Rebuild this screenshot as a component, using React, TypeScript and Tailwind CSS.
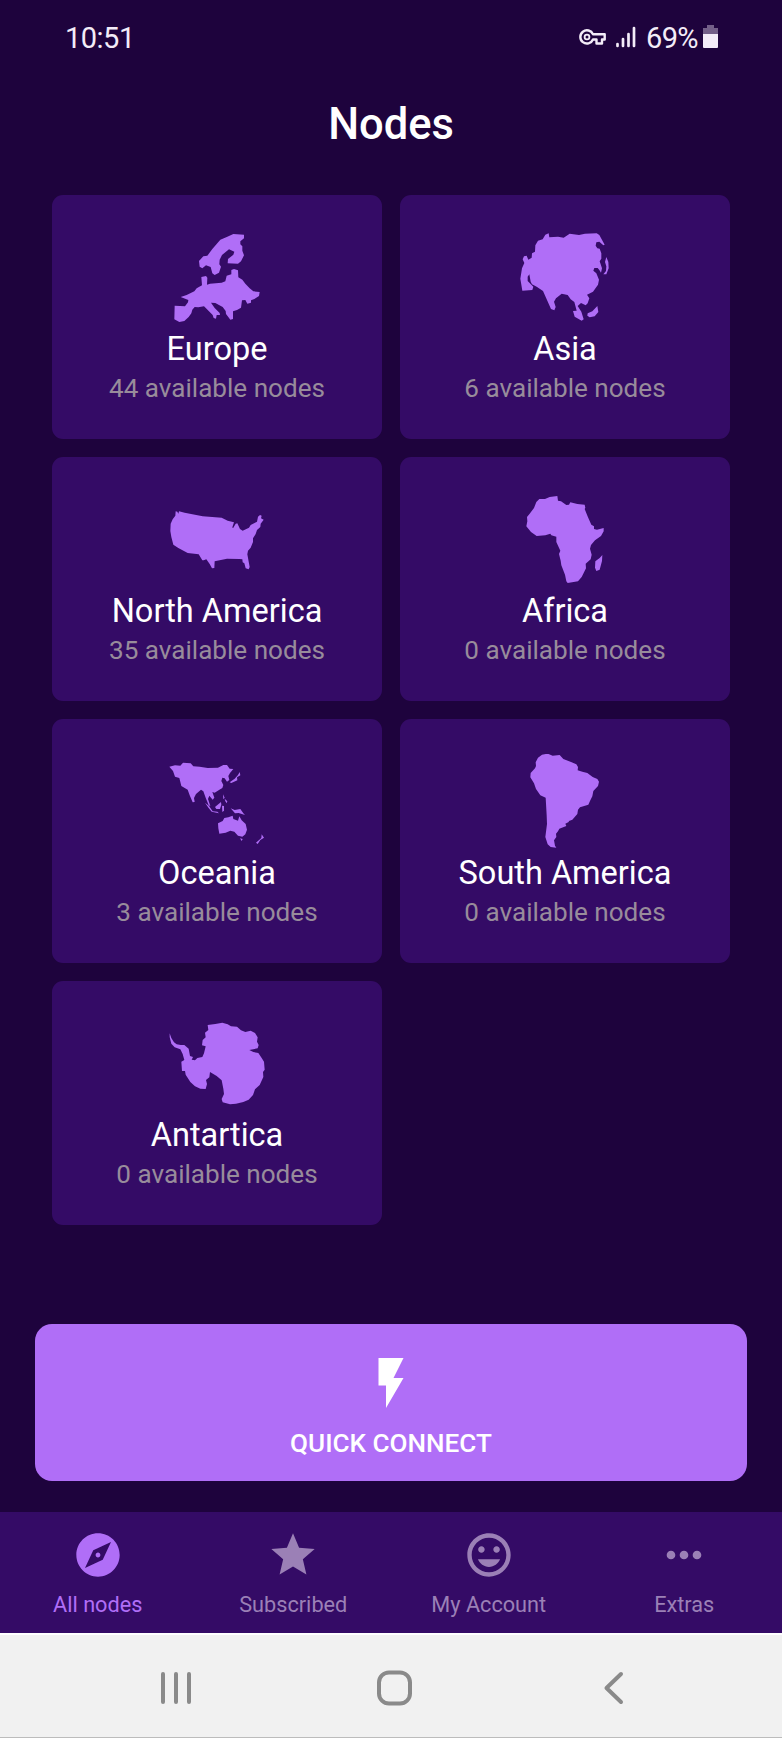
import React from "react";
import {
    MdExplore,
    MdFlashOn,
    MdInsertEmoticon,
    MdMoreHoriz,
    MdStar,
} from "react-icons/md";

interface Region {
    name: string;
    nodes: number;
    viewBox: string;
    path: string;
}

const regions: Region[] = [
    {
        name: "Europe",
        nodes: 44,
        viewBox: "27 30 288 288",
        path: "M117 123L130 109L142 107L157 87L181 59L202 50L220 42L252 44L252 55L241 64L241 73L247 79L247 92L252 106L243 124L234 131L203 130L204 117L220 104L223 95L207 88L196 97L186 105L179 119L178 133L183 140L177 158L164 165L157 160L152 141L138 136L127 145L119 140Z M124 171L138 168L142 173L141 194L150 191L185 188L196 184L200 167L214 163L214 150L222 147L234 151L235 172L247 179L256 191L269 205L280 214L299 216L297 228L283 237L273 241L273 248L262 251L256 240L246 241L243 263L231 270L219 274L219 297L211 299L198 282L197 273L188 261L166 249L153 248L164 264L179 279L180 285L170 285L168 296L161 294L158 285L138 265L132 259L115 262L104 261L97 269L94 280L86 291L73 303L58 306L43 298L44 257L75 259L84 247L85 240L62 231L80 225L103 214L110 205L126 196Z",
    },
    {
        name: "Asia",
        nodes: 6,
        viewBox: "21 30 288 288",
        path: "M75 95L76 76L84 62L98 58L106 44L116 40L118 52L144 50L161 53L179 41L207 45L225 41L260 40L268 45L284 74L280 76L268 65L259 67L257 77L262 85L269 86L274 100L274 116L269 124L276 145L273 158L268 150L263 144L253 144L250 152L259 160L267 179L264 194L249 215L231 224L238 235L233 250L227 256L213 249L203 258L214 275L221 298L215 302L194 290L189 273L200 272L193 246L182 238L173 225L155 221L138 235L132 245L137 261L133 271L123 267L108 233L99 213L80 200L66 193L62 185L58 163L53 170L53 183L70 200L67 210L37 212L31 176L36 145L43 129L38 118L42 109L50 107L55 119L65 113L66 100Z M289 111L295 126L296 145L289 163L280 163L288 153L289 139L285 126Z M262 258L265 276L254 289L239 292L232 287L233 280L247 274Z",
    },
    {
        name: "North America",
        nodes: 35,
        viewBox: "27 -24 288 288",
        path: "M47 34L52 35L55 41L57 34L74 38L128 49L185 53L203 62L222 67L217 82L219 85L227 71L232 70L240 87L248 92L267 83L272 75L291 65L294 50L300 45L305 47L303 55L311 59L302 71L301 81L291 90L287 102L279 115L279 126L272 143L264 152L262 163L269 201L266 208L257 205L253 190L248 187L247 178L238 177L201 176L164 184L163 204L156 205L149 192L139 178L131 181L127 181L116 163L83 159L55 144L40 134L34 111L31 93L32 71L38 58L46 47Z",
    },
    {
        name: "Africa",
        nodes: 0,
        viewBox: "6 21 288 288",
        path: "M73 42L90 42L104 36L127 33L129 47L138 49L154 60L162 59L166 52L187 57L209 59L211 68L209 72L219 97L229 119L237 124L237 132L246 134L266 129L266 139L258 153L240 166L228 180L225 191L230 209L227 223L212 236L213 250L206 264L200 276L189 289L158 294L154 289L150 269L139 241L137 227L132 207L136 197L124 171L124 155L109 151L106 146L91 151L65 153L48 141L34 124L37 109L36 96L44 86L57 69L64 51Z M262 210L261 228L254 254L244 258L240 248L241 229L254 219Z",
    },
    {
        name: "Oceania",
        nodes: 3,
        viewBox: "27 12 288 288",
        path: "M28 50L45 46L61 47L69 38L92 40L100 49L119 50L143 54L174 53L190 45L201 45L209 56L220 57L210 69L205 78L208 90L201 95L194 85L187 83L184 93L190 105L187 114L177 120L164 128L157 126L163 143L158 149L148 137L144 147L151 168L146 166L137 143L130 124L123 119L108 132L102 144L104 156L98 157L89 136L83 119L64 108L58 84L45 80L39 63Z M239 66L241 76L231 82L232 91L214 99L209 97L224 86L234 75Z M135 158L147 168L158 184L172 185L177 190L155 185L146 174Z M165 171L183 156L184 164L180 177L169 177Z M189 133L194 143L190 148Z M194 146L202 154L200 160L196 154Z M186 167L192 168L192 182L187 186Z M212 175L224 180L241 177L250 190L255 195L236 189L225 190Z M174 220L188 213L193 204L205 202L218 197L220 207L234 212L238 199L245 211L257 222L261 239L256 253L247 260L234 257L223 245L211 242L197 248L178 251L175 235Z M240 265L248 267L245 273Z M305 253L312 263L301 270L293 282L288 278L304 264Z",
    },
    {
        name: "South America",
        nodes: 0,
        viewBox: "-9 27 288 288",
        path: "M66 29L83 26L98 32L119 30L130 42L155 52L169 58L174 66L173 76L187 80L202 84L218 96L232 102L237 110L234 123L220 138L217 154L211 166L205 179L180 187L174 194L172 207L157 224L147 228L146 231L136 236L139 243L118 251L114 259L108 266L109 276L102 286L105 302L109 308L92 306L83 298L76 276L81 237L80 211L77 158L61 151L48 132L42 115L31 97L32 84L45 70L48 63L47 52L54 38Z",
    },
    {
        name: "Antartica",
        nodes: 0,
        viewBox: "27 18 288 288",
        path: "M143 45L166 42L187 38L203 43L213 49L231 50L243 61L256 66L272 62L285 69L293 82L291 95L296 105L293 115L268 120L280 126L295 129L305 144L312 155L314 179L309 186L310 201L299 225L285 238L279 255L266 269L250 276L228 281L210 283L188 277L185 267L192 252L190 236L185 211L170 198L150 186L148 202L138 210L141 222L137 237L121 236L105 229L91 216L77 194L75 183L66 183L64 155L73 150L68 132L61 118L44 112L34 101L29 81L29 70L34 84L42 97L50 103L62 105L73 105L86 116L90 138L99 141L95 149L105 151L112 144L127 141L132 130L137 109L126 106L128 90L137 82L135 68L145 60Z",
    },
];

const tabs = [
    { label: "All nodes", Icon: MdExplore, active: true },
    { label: "Subscribed", Icon: MdStar, active: false },
    { label: "My Account", Icon: MdInsertEmoticon, active: false },
    { label: "Extras", Icon: MdMoreHoriz, active: false },
];

function StatusBar() {
    return (
        <div className="flex h-[76px] items-center justify-between pl-[65px] pr-[64px] text-[29px] text-[#f3ecf8]">
            <span className="pt-[2px] tracking-[-0.5px]">10:51</span>
            <div className="flex items-center">
                <svg className="mr-[10px] mb-[2px] h-[16px] w-[27px]" viewBox="0 0 27 16" fill="none" stroke="currentColor" strokeWidth="2.4" strokeLinejoin="round">
                    <path d="M14 5.300H25.700V10.500H23V14.500H17.500V10.500H14A6.600 6.600 0 1 1 14 5.300Z" />
                    <circle cx="8" cy="8" r="2.400" strokeWidth="1.800" />
                </svg>
                <svg className="mr-[10px] mb-[2px] h-[22px] w-[20px]" viewBox="0 0 20 22" stroke="currentColor" strokeWidth="2.7" strokeLinecap="round">
                    <path d="M1.5 18V20M7 13V20M12.5 8V20M18 2V20" />
                </svg>
                <span className="pt-[2px] tracking-[-0.6px]">69%</span>
                <svg className="ml-[5px] mb-[3px] h-[23px] w-[15px]" viewBox="0 0 15 23">
                    <path d="M4 0H11V3H15V10H0V3H4Z" fill="#735f88" />
                    <path d="M0 9H15V22Q15 23 14 23H1Q0 23 0 22Z" fill="#f3ecf8" />
                </svg>
            </div>
        </div>
    );
}

function RegionCard({ region }: { region: Region }) {
    return (
        <button className="flex h-[244px] flex-col items-center rounded-[11px] bg-[#340b66] pt-[35px]">
            <svg className="size-[96px] shrink-0" viewBox={region.viewBox} fill="#b06ef7">
                <path d={region.path} />
            </svg>
            <span className="mt-[1px] text-[32.5px] leading-[44px] text-white">{region.name}</span>
            <span className="text-[26.1px] leading-[35px] text-[#988c9b]">{region.nodes} available nodes</span>
        </button>
    );
}

function SystemNav() {
    return (
        <div className="flex h-[105px] items-center border-t-2 border-b border-t-white border-b-[#bcbcbc] bg-[#f1f1f1] pt-[3px] pl-[158px] text-[#8a8a8a]">
            <svg className="h-[40px] w-[36px]" viewBox="0 0 36 40" stroke="currentColor" strokeWidth="4" strokeLinecap="round">
                <path d="M5 6V34M18 6V34M31 6V34" />
            </svg>
            <svg className="ml-[180px] size-[40px]" viewBox="0 0 40 40" fill="none" stroke="currentColor" strokeWidth="4">
                <rect x="5" y="4.5" width="31" height="31" rx="10" />
            </svg>
            <svg className="ml-[184px] h-[40px] w-[30px]" viewBox="0 0 30 40" fill="none" stroke="currentColor" strokeWidth="4" strokeLinecap="round" strokeLinejoin="round">
                <path d="M23 6L8.500 20L23 34" />
            </svg>
        </div>
    );
}

export default function App() {
    return (
        <div className="flex h-[1738px] w-[782px] flex-col overflow-hidden bg-[#1e033d] font-[Roboto,sans-serif]">
            <StatusBar />
            <h1 className="h-[119px] pt-[23px] text-center text-[43.5px] leading-[52px] font-medium text-white">Nodes</h1>

            <div className="grid grid-cols-2 gap-[18px] px-[52px]">
                {regions.map((region) => (
                    <RegionCard key={region.name} region={region} />
                ))}
            </div>

            <button className="mx-[35px] mt-[99px] flex h-[157px] shrink-0 flex-col items-center rounded-[17px] bg-[#b06ef7] pt-[29px] text-white">
                <MdFlashOn className="size-[60px]" />
                <span className="mt-[12px] text-[26.1px] leading-[36px] font-medium">QUICK CONNECT</span>
            </button>

            <nav className="mt-auto grid h-[121px] grid-cols-4 bg-[#340b66]">
                {tabs.map(({ label, Icon, active }) => (
                    <button
                        key={label}
                        className={`flex flex-col items-center pt-[17px] ${active ? "text-[#b06ef7]" : "text-[#9b80b6]"}`}
                    >
                        <Icon className="size-[52px]" />
                        <span className="mt-[9px] text-[21.7px] leading-[30px]">{label}</span>
                    </button>
                ))}
            </nav>
            <SystemNav />
        </div>
    );
}
